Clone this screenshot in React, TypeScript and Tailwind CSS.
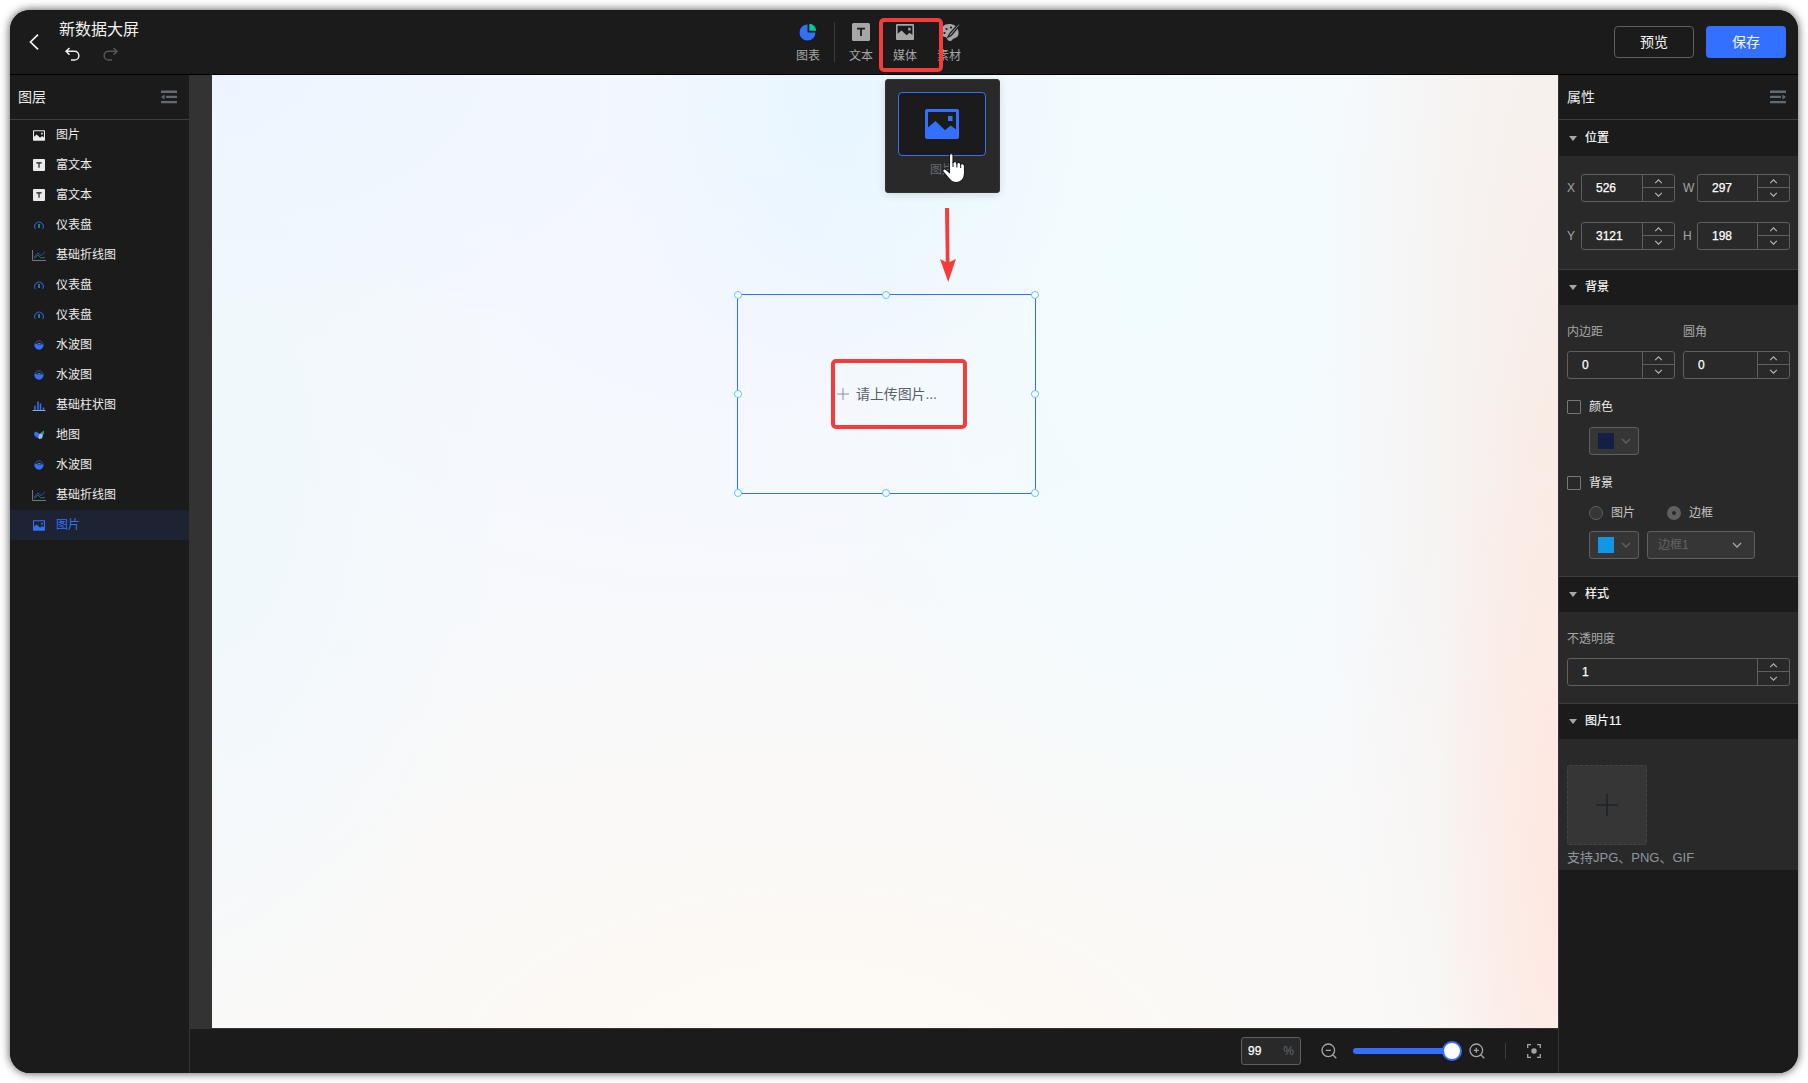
import React from 'react';

const SANS = 'font-["Liberation_Sans","Noto_Sans_CJK_SC",sans-serif]';

type IconProps = { className?: string };

function PictureIcon({ className = '' }: IconProps) {
  return (
    <svg viewBox="0 0 34 30" className={className} fill="currentColor" fillRule="evenodd">
      <path d="M2 0h30a2 2 0 0 1 2 2v26a2 2 0 0 1-2 2H2a2 2 0 0 1-2-2V2a2 2 0 0 1 2-2zM3 3v15.500l7.500-6.500 9.500 9.200 5.700-4.700 5.300 4V3zM23 7h4.500v5H23z" />
    </svg>
  );
}

function LetterTile({ className = '' }: IconProps) {
  return (
    <svg viewBox="0 0 18 18" className={className}>
      <rect width="18" height="18" rx="1.500" fill="currentColor" />
      <path d="M5 5.700h8M9 5.700V13" stroke="#1b1b1b" strokeWidth="1.800" fill="none" />
    </svg>
  );
}

function GaugeIcon() {
  return (
    <svg viewBox="0 0 12 12" className="h-3 w-3" fill="none">
      <path d="M2.500 10A4.300 4.300 0 1 1 9.500 10" stroke="#2f5fd6" strokeWidth="1.100" />
      <path d="M6 5v4" stroke="#12a58c" strokeWidth="1.600" />
    </svg>
  );
}

function LineChartIcon() {
  return (
    <svg viewBox="0 0 14 12" className="h-3 w-3.5" fill="none">
      <path d="M.5 1v10.500H14" stroke="#777" />
      <path d="M2 8l4-4 3 2.500L13 3" stroke="#2a55bd" strokeWidth=".9" />
      <path d="M2 9.500L6 6l3 3 4-.5" stroke="#138573" strokeWidth=".9" />
    </svg>
  );
}

function LiquidIcon() {
  return (
    <svg viewBox="0 0 12 12" className="h-3 w-3" fill="none">
      <circle cx="6" cy="6" r="4.200" stroke="#2c58c9" strokeWidth=".9" />
      <path d="M2 5c1.500-.8 2.500.9 4 .9s2.600-1.200 4-.6A4.200 4.200 0 1 1 2 5z" fill="#3370ff" />
      <path d="M4 4.800C5 4 7.500 4 8.500 4.900L6 5.500z" fill="#8fa6d8" />
    </svg>
  );
}

function BarsIcon() {
  return (
    <svg viewBox="0 0 14 12" className="h-3 w-3.5" fill="none">
      <path d="M.5 11.500h13" stroke="#9aa3b5" />
      <path d="M3 11V6.500M6 11V2.500M8.500 11V4.500M11.500 11V8.500" stroke="#3370ff" strokeWidth="1.500" />
    </svg>
  );
}

function MapIcon() {
  return (
    <svg viewBox="0 0 12 12" className="h-3 w-3">
      <path d="M1 4l2-1.500L6 4.500l1 3.500-3 .8L1.500 6.500z" fill="#3370ff" />
      <path d="M6 5l3-1 1 2-1 3.500-3 .5-1-2 1-1z" fill="#9db8f5" />
      <path d="M8 3.500L11 1.500v3L9.500 6z" fill="#12a58c" />
    </svg>
  );
}

function Chevron({ up = false, className = '' }: IconProps & { up?: boolean }) {
  return (
    <svg viewBox="0 0 10 6" className={className} fill="none" stroke="currentColor" strokeWidth="1.300">
      <path d={up ? 'M1 5l4-4 4 4' : 'M1 1l4 4 4-4'} />
    </svg>
  );
}

function FoldIcon({ flip = false }: { flip?: boolean }) {
  return (
    <svg viewBox="0 0 16 14" className="h-3.5 w-4" fill="#646a73">
      <rect y=".6" width="16" height="2.300" rx=".5" />
      <rect y="11" width="16" height="2.300" rx=".5" />
      <g transform={flip ? 'matrix(-1 0 0 1 16 0)' : undefined}>
        <rect x="5" y="5.800" width="11" height="2.300" rx=".5" />
        <path d="M0 7l3.500-2.500v5z" />
      </g>
    </svg>
  );
}

type Kind = 'picture' | 'text' | 'gauge' | 'line' | 'liquid' | 'bars' | 'map';

const layers: { kind: Kind; name: string; active?: boolean }[] = [
  { kind: 'picture', name: '图片' },
  { kind: 'text', name: '富文本' },
  { kind: 'text', name: '富文本' },
  { kind: 'gauge', name: '仪表盘' },
  { kind: 'line', name: '基础折线图' },
  { kind: 'gauge', name: '仪表盘' },
  { kind: 'gauge', name: '仪表盘' },
  { kind: 'liquid', name: '水波图' },
  { kind: 'liquid', name: '水波图' },
  { kind: 'bars', name: '基础柱状图' },
  { kind: 'map', name: '地图' },
  { kind: 'liquid', name: '水波图' },
  { kind: 'line', name: '基础折线图' },
  { kind: 'picture', name: '图片', active: true },
];

function LayerIcon({ kind }: { kind: Kind }) {
  switch (kind) {
    case 'picture':
      return <PictureIcon className="h-[11px] w-3" />;
    case 'text':
      return <LetterTile className="h-3 w-3" />;
    case 'gauge':
      return <GaugeIcon />;
    case 'line':
      return <LineChartIcon />;
    case 'liquid':
      return <LiquidIcon />;
    case 'bars':
      return <BarsIcon />;
    case 'map':
      return <MapIcon />;
  }
}

function Tool({ label, children, className = '' }: { label: string; children: React.ReactNode; className?: string }) {
  return (
    <div className={'flex w-8 flex-col items-center ' + className}>
      <span className="flex h-5 shrink-0 items-center">{children}</span>
      <span className="mt-[5px] shrink-0">{label}</span>
    </div>
  );
}

function Header() {
  return (
    <header className="relative flex h-[65px] shrink-0 items-start justify-between border-b border-black bg-[#1b1b1b]">
      <div className="flex">
        <svg viewBox="0 0 10 16" className="mt-6 ml-[19px] h-4 w-2.5" fill="none" stroke="#f2f2f2" strokeWidth="1.700">
          <path d="M9 .7L1.500 8 9 15.300" />
        </svg>
        <div className="ml-5 pt-2">
          <div className="h-6 text-base leading-6 text-[#f2f2f2]">新数据大屏</div>
          <div className="mt-[5px] flex gap-[23px] pl-1.5">
            <svg viewBox="0 0 15 15" className="h-[15px] w-[15px]" fill="none" stroke="#f2f2f2" strokeWidth="1.500">
              <path d="M4.500 1L1 4.300l3.500 3.400M1 4.300h8.500a4.200 4.200 0 0 1 0 8.700H6" />
            </svg>
            <svg viewBox="0 0 15 15" className="h-[15px] w-[15px]" fill="none" stroke="#575757" strokeWidth="1.500">
              <path d="M10.500 1L14 4.300l-3.500 3.400M14 4.300H5.500a4.200 4.200 0 0 0 0 8.700H9" />
            </svg>
          </div>
        </div>
      </div>

      <nav className="absolute top-3 left-[782px] flex h-10 text-xs leading-[18px] text-[#a6a6a6]">
        <Tool label="图表">
          <svg viewBox="0 0 18 18" className="h-[18px] w-[18px]">
            <path d="M8.500 1.500v8h8a8 8 0 1 1-8-8z" fill="#3370ff" />
            <path d="M10.300.8a7.200 7.200 0 0 1 7 7h-7z" fill="#04c8a0" />
          </svg>
        </Tool>
        <div className="ml-[10px] w-px bg-[#3a3a3a]" />
        <Tool label="文本" className="ml-[10px]">
          <LetterTile className="h-[18px] w-[18px]" />
        </Tool>
        <Tool label="媒体" className="ml-3">
          <PictureIcon className="h-4 w-[18px]" />
        </Tool>
        <Tool label="素材" className="ml-3">
          <svg viewBox="0 0 20 18" className="ml-px h-[18px] w-5">
            <path d="M9 1C4 1 1 4.500 1 9s3.500 5 4.500 5c1.500 0 1.500 4 4.500 4 2.500 0 2-2 4-2.500 3.500-1 5-3 4.500-6.500C18 3.500 14 1 9 1z" fill="#a6a6a6" />
            <circle cx="6.500" cy="6" r="1.100" fill="#1b1b1b" />
            <circle cx="4.500" cy="10" r="1.100" fill="#1b1b1b" />
            <circle cx="11" cy="4.500" r="1.100" fill="#1b1b1b" />
            <path d="M19 .3L9.800 10.500 8 14l3.200-1.500L20 2z" fill="#a6a6a6" stroke="#1b1b1b" strokeWidth="1.300" />
          </svg>
        </Tool>
      </nav>

      <div className="mt-4 mr-3 flex gap-3 text-sm text-[#f5f5f5]">
        <button className="h-8 w-20 rounded-sm border border-[#5f5f5f]">预览</button>
        <button className="h-8 w-20 rounded-sm bg-[#3370ff]">保存</button>
      </div>
    </header>
  );
}

function LayerPanel() {
  return (
    <aside className="flex w-[180px] shrink-0 flex-col border-r border-[#333] bg-[#1b1b1b]">
      <div className="flex h-[45px] shrink-0 items-center justify-between border-b border-[#3d3d3d] pr-3 pl-2 text-sm text-[#ebebeb]">
        <span>图层</span>
        <FoldIcon />
      </div>
      {layers.map((l, i) => (
        <div
          key={i}
          className={
            l.active
              ? 'flex h-[30px] shrink-0 items-center bg-[#1d2333] pl-[21px] text-xs text-[#3370ff]'
              : 'flex h-[30px] shrink-0 items-center pl-[21px] text-xs text-[#ebebeb]'
          }
        >
          <span className="flex w-4 justify-center">
            <LayerIcon kind={l.kind} />
          </span>
          <span className="ml-[9px]">{l.name}</span>
        </div>
      ))}
    </aside>
  );
}

const handles = [
  '-left-1 -top-1',
  'left-[144px] -top-1',
  '-right-1 -top-1',
  '-left-1 top-[95px]',
  '-right-1 top-[95px]',
  '-left-1 -bottom-1',
  'left-[144px] -bottom-1',
  '-right-1 -bottom-1',
];

function Canvas() {
  return (
    <div className="flex min-h-0 flex-1 bg-[#333] pl-[22px]">
      <div className="relative flex-1 bg-[#f7f9fc] bg-[radial-gradient(ellipse_9%_60%_at_100%_82%,#ffe7e0_0%,#ffe7e000_100%),radial-gradient(ellipse_17%_110%_at_100%_35%,#f7ede7_0%,#f7ede700_100%),radial-gradient(ellipse_18%_32%_at_47%_2%,#e7f6ff_0%,#e7f6ff00_100%),radial-gradient(ellipse_26%_70%_at_70%_20%,#f1fcff_0%,#f1fcff00_100%),radial-gradient(ellipse_40%_30%_at_0%_0%,#ecf5ff_0%,#ecf5ff00_100%),radial-gradient(ellipse_22%_60%_at_0%_42%,#eff8fc_0%,#eff8fc00_100%),radial-gradient(ellipse_50%_40%_at_40%_20%,#f3f7ff_0%,#f3f7ff00_100%),radial-gradient(ellipse_75%_55%_at_45%_105%,#fef9f2_0%,#fef9f200_100%)]">
        <div className="absolute top-[219px] left-[525px] flex h-[200px] w-[299px] items-center border border-[#3370ff]">
          <svg viewBox="0 0 12 12" className="ml-[99px] h-3 w-3" stroke="#8a9099" fill="none">
            <path d="M6 0v12M0 6h12" />
          </svg>
          <span className="ml-[7px] text-sm tracking-[-0.1px] text-[#5a5f68]">请上传图片...</span>
          {handles.map((h) => (
            <i key={h} className={'absolute h-2 w-2 rounded-full border border-[#5bc5f7] bg-white ' + h} />
          ))}
        </div>
      </div>
    </div>
  );
}

function StatusBar() {
  return (
    <footer className="flex h-[45px] shrink-0 items-center justify-end border-t border-[#333] bg-[#1b1b1b] pr-[17px] text-[#a6a6a6]">
      <div className="flex h-7 w-[60px] items-center justify-between rounded-[3px] border border-[#5f5f5f] bg-[#292929] px-1.5 text-xs">
        <span className="text-white [-webkit-text-stroke:0.250px]">99</span>
        <span className="text-[#646a73]">%</span>
      </div>
      <svg viewBox="0 0 16 16" className="ml-5 h-4 w-4" fill="none" stroke="currentColor" strokeWidth="1.300">
        <circle cx="7.300" cy="7.300" r="6.300" />
        <path d="M4.800 7.300h5M12 12l3.300 3.300" />
      </svg>
      <div className="ml-4 flex w-[109px] items-center">
        <div className="-mr-px h-1.5 flex-1 rounded-l-sm bg-[#3370ff]" />
        <div className="h-5 w-5 rounded-full border-2 border-[#3370ff] bg-white" />
      </div>
      <svg viewBox="0 0 16 16" className="ml-[7px] h-4 w-4" fill="none" stroke="currentColor" strokeWidth="1.300">
        <circle cx="7.300" cy="7.300" r="6.300" />
        <path d="M4.800 7.300h5M7.300 4.800v5M12 12l3.300 3.300" />
      </svg>
      <div className="ml-5 h-4 w-px bg-[#3d3d3d]" />
      <svg viewBox="0 0 14 14" className="ml-[21px] h-3.5 w-3.5" fill="none" stroke="currentColor" strokeWidth="1.300">
        <path d="M.7 4V.7H4M10 .7h3.300V4M13.300 10v3.300H10M4 13.300H.7V10" />
        <circle cx="7" cy="7" r="2.700" fill="currentColor" stroke="none" />
      </svg>
    </footer>
  );
}

function NumberBox({ value, className = '' }: { value: string; className?: string }) {
  return (
    <div className={'flex h-7 rounded-[3px] border border-[#5f5f5f] text-xs text-white ' + className}>
      <span className="flex-1 pl-3.5 leading-[26px] [-webkit-text-stroke:0.250px]">{value}</span>
      <span className="flex w-8 flex-col border-l border-[#5f5f5f] text-[#b8b8b8]">
        <span className="flex h-[13px] items-center justify-center border-b border-[#5f5f5f] pt-px">
          <Chevron up className="h-[5px] w-[9px]" />
        </span>
        <span className="flex h-[13px] items-center justify-center">
          <Chevron className="h-[5px] w-[9px]" />
        </span>
      </span>
    </div>
  );
}

function Section({ title, first = false, children, className = '' }: { title: string; first?: boolean; children: React.ReactNode; className?: string }) {
  return (
    <section>
      <div className={(first ? 'border-[#1b1b1b]' : 'border-[#3d3d3d]') + ' flex h-9 items-center border-t bg-[#1b1b1b] pb-px pl-2.5 text-xs text-white'}>
        <svg viewBox="0 0 8 5" className="mt-px h-[5px] w-2" fill="#a6a6a6">
          <path d="M0 0h8L4 5z" />
        </svg>
        <span className="ml-2 [-webkit-text-stroke:0.150px]">{title}</span>
      </div>
      <div className={'bg-[#292929] px-2 text-xs text-[#a6a6a6] ' + className}>{children}</div>
    </section>
  );
}

function Swatch({ color }: { color: string }) {
  return (
    <div className="flex h-7 w-[50px] items-center rounded-[3px] border border-[#5f5f5f] bg-[#363636] pl-2 text-[#646464]">
      <i className={'h-4 w-4 ' + color} />
      <Chevron className="ml-[7px] h-1.5 w-2.5" />
    </div>
  );
}

function PropertyPanel() {
  return (
    <aside className="w-[240px] shrink-0 border-l border-[#333] bg-[#1b1b1b]">
      <div className="flex h-[45px] items-center justify-between border-b border-[#3d3d3d] pr-3 pl-2 text-sm text-[#ebebeb]">
        <span>属性</span>
        <FoldIcon flip />
      </div>
      <Section title="位置" first className="h-[113px] pt-[18px]">
        <div className="flex items-center">
          <span className="w-3.5">X</span>
          <NumberBox value="526" className="w-[94px]" />
          <span className="ml-2 w-3.5">W</span>
          <NumberBox value="297" className="w-[93px]" />
        </div>
        <div className="mt-5 flex items-center">
          <span className="w-3.5">Y</span>
          <NumberBox value="3121" className="w-[94px]" />
          <span className="ml-2 w-3.5">H</span>
          <NumberBox value="198" className="w-[93px]" />
        </div>
      </Section>
      <Section title="背景" className="h-[271px] pt-[18px]">
        <div className="flex h-[18px] items-center">
          <span className="w-[116px]">内边距</span>
          <span>圆角</span>
        </div>
        <div className="mt-[10px] flex gap-2">
          <NumberBox value="0" className="w-[108px]" />
          <NumberBox value="0" className="w-[107px]" />
        </div>
        <div className="mt-[19px] flex h-[18px] items-center gap-2 text-[#ebebeb]">
          <i className="h-3.5 w-3.5 rounded-[1px] border border-[#777]" />
          颜色
        </div>
        <div className="mt-[11px] pl-[22px]">
          <Swatch color="bg-[#151f46]" />
        </div>
        <div className="mt-[19px] flex h-[18px] items-center gap-2 text-[#ebebeb]">
          <i className="h-3.5 w-3.5 rounded-[1px] border border-[#777]" />
          背景
        </div>
        <div className="mt-3 flex h-[18px] items-center pl-[22px] text-[#c4c4c4]">
          <i className="mr-2 h-3.5 w-3.5 rounded-full border border-[#5f5f5f] bg-[#363636]" />
          图片
          <i className="mr-2 ml-8 h-3.5 w-3.5 rounded-full border-[5px] border-[#5f5f5f] bg-[#292929]" />
          边框
        </div>
        <div className="mt-[9px] flex gap-2 pl-[22px]">
          <Swatch color="bg-[#1296e8]" />
          <div className="flex h-7 w-[108px] items-center justify-between rounded-[3px] border border-[#5f5f5f] bg-[#363636] pr-3 pl-2.5 text-[#646464]">
            边框1
            <Chevron className="h-1.5 w-2.5 text-[#a6a6a6]" />
          </div>
        </div>
      </Section>
      <Section title="样式" className="h-[91px] pt-[18px]">
        <div className="h-[18px] leading-[18px]">不透明度</div>
        <NumberBox value="1" className="mt-[10px] w-[223px]" />
      </Section>
      <Section title="图片11" className="h-[131px] pt-[26px]">
        <div className="flex h-20 w-20 items-center justify-center rounded-[3px] border border-dashed border-[#444] bg-[#363636]">
          <svg viewBox="0 0 22 22" className="h-[22px] w-[22px]" stroke="#1f2329" strokeWidth="1.700" fill="none">
            <path d="M11 0v22M0 11h22" />
          </svg>
        </div>
        <div className="mt-[3px] text-[13px] leading-5 whitespace-nowrap text-[#8f959e]">支持JPG、PNG、GIF</div>
      </Section>
    </aside>
  );
}

function MediaMenu() {
  return (
    <div className="absolute top-[79px] left-[885px] flex h-[114px] w-[115px] flex-col items-center rounded-[3px] border border-[#333] bg-[#292929] pt-3 pr-px shadow-[0_2px_8px_rgba(0,0,0,0.12)]">
      <div className="flex h-16 w-[88px] items-center justify-center rounded-sm border border-[#3370ff] bg-[#1b1b1b] text-[#3370ff]">
        <PictureIcon className="h-[30px] w-[34px]" />
      </div>
      <span className="mt-[5px] text-xs leading-[18px] text-[#646a73]">图片</span>
    </div>
  );
}

function Annotations() {
  return (
    <>
      <div className="absolute top-[18px] left-[879px] h-[54px] w-16 rounded-[5px] border-4 border-[#f53b3b]" />
      <div className="absolute top-[359px] left-[831px] h-[70px] w-[136px] rounded-[5px] border-4 border-[#f53b3b]" />
      <svg viewBox="0 0 16 74" className="absolute top-[208px] left-[940px] h-[74px] w-4" fill="#f53b3b">
        <path d="M5 0h4l.5 54L16 51 8.200 74 0 51l5.800 3z" />
      </svg>
      <svg viewBox="0 0 24 31" className="absolute top-[153px] left-[942px] h-[31px] w-6">
        <path
          d="M7.500 2.200C7.500.2 11 .2 11 2.200V10c.3-2 3.700-1.600 3.900.3.600-1.400 3.500-1 3.700.9.700-1.100 3.900-.6 3.900 1.800V20c0 5.500-3 9.500-8 9.500-4 0-6-1.500-8-4.500L1 18.500c-1-2 1.300-3.500 3-2l3.500 3z"
          fill="#fff"
          stroke="#15181f"
          strokeWidth="1.100"
        />
        <path d="M11 9v5M14.900 10v4.500M18.700 11v4" stroke="#15181f" strokeWidth="1" />
      </svg>
    </>
  );
}

export default function App() {
  return (
    <div className={'relative h-[1083px] w-[1808px] overflow-hidden bg-white p-2.5 ' + SANS}>
      <div className="flex h-[1063px] w-[1788px] flex-col overflow-hidden rounded-[20px] bg-[#1b1b1b] shadow-[0_0_10px_rgba(0,0,0,0.7)]">
        <Header />
        <div className="flex min-h-0 flex-1">
          <LayerPanel />
          <main className="flex min-w-0 flex-1 flex-col">
            <Canvas />
            <StatusBar />
          </main>
          <PropertyPanel />
        </div>
      </div>
      <MediaMenu />
      <Annotations />
    </div>
  );
}
